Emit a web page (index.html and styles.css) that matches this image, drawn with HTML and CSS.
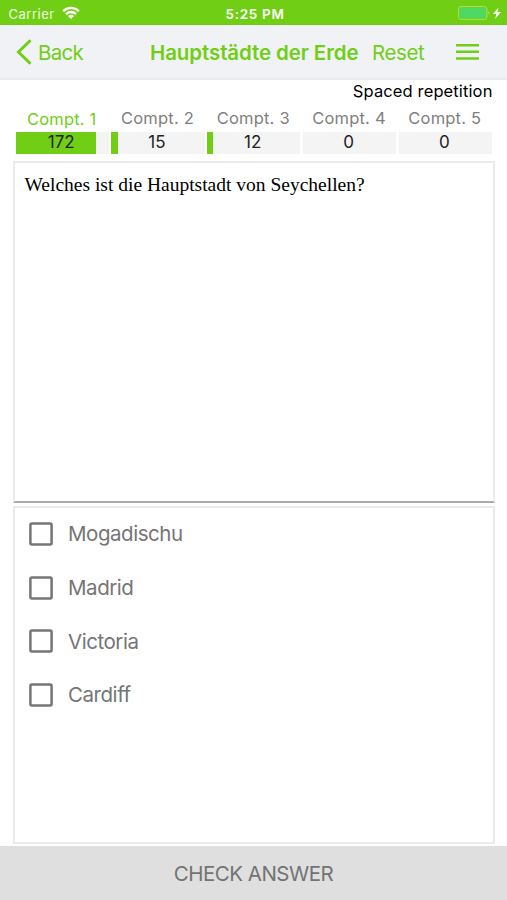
FILE: index.html
```html
<!DOCTYPE html>
<html lang="de">
<head>
<meta charset="utf-8">
<title>Hauptstädte der Erde</title>
<link rel="stylesheet" href="styles.css">
</head>
<body>
<div class="status">
  <span class="carrier">Carrier</span>
  <svg class="wifi" width="18" height="14" viewBox="0 0 18 14" fill="none" stroke="#fff" stroke-width="2.3"><path d="M1.2 5.2C5.4 .8 12.6 .8 16.8 5.2M4 8.1c2.8-2.8 7.2-2.8 10 0"/><path d="M9 13L5.9 9.9c1.8-1.6 4.4-1.6 6.2 0z" fill="#fff" stroke="none"/></svg>
  <span class="clock">5:25 PM</span>
  <svg class="battery" width="44" height="16" viewBox="0 0 44 16"><rect x=".6" y="1.6" width="28.2" height="12.8" rx="2.4" fill="none" stroke="#a4df6c"/><rect x="2" y="3" width="25.4" height="10" rx="1" fill="#4cd964"/><path d="M30.5 6c1.5.5 1.5 3.500 0 4z" fill="#a4df6c"/><path d="M40.500 2.500L35 9h3.500L37 14l6-7h-3.600z" fill="#fff"/></svg>
</div>
<header class="nav">
  <svg class="chevron" width="16" height="26" viewBox="0 0 16 26" fill="none" stroke="#70cf14" stroke-width="3"><path d="M14.500 1.300L2.500 13l12 11.700"/></svg>
  <span class="back">Back</span>
  <h1 class="title">Hauptstädte der Erde</h1>
  <span class="reset">Reset</span>
  <svg class="menu" width="23" height="16" viewBox="0 0 23 16" fill="#70cf14"><path d="M0 0h23v2.500H0zM0 6.600h23v2.500H0zM0 13.200h23v2.500H0z"/></svg>
</header>
<div class="mode"><span>Spaced repetition</span></div>
<div class="compartments">
  <div class="compartment active"><span class="label">Compt. 1</span><div class="bar"><i class="fill" style="width:86.500%"></i><b>172</b></div></div>
  <div class="compartment"><span class="label">Compt. 2</span><div class="bar"><i class="fill" style="width:7.500%"></i><b>15</b></div></div>
  <div class="compartment"><span class="label">Compt. 3</span><div class="bar"><i class="fill" style="width:6%"></i><b>12</b></div></div>
  <div class="compartment"><span class="label">Compt. 4</span><div class="bar"><b>0</b></div></div>
  <div class="compartment"><span class="label">Compt. 5</span><div class="bar"><b>0</b></div></div>
</div>
<main class="question"><span>Welches ist die Hauptstadt von Seychellen?</span></main>
<section class="answers">
  <div class="answer"><svg class="box" width="24" height="24" viewBox="0 0 24 24"><rect x="1.400" y="1.400" width="21.200" height="21.200" rx="1.500" fill="none" stroke="#757575" stroke-width="2.500"/></svg><span>Mogadischu</span></div>
  <div class="answer"><svg class="box" width="24" height="24" viewBox="0 0 24 24"><rect x="1.400" y="1.400" width="21.200" height="21.200" rx="1.500" fill="none" stroke="#757575" stroke-width="2.500"/></svg><span>Madrid</span></div>
  <div class="answer"><svg class="box" width="24" height="24" viewBox="0 0 24 24"><rect x="1.400" y="1.400" width="21.200" height="21.200" rx="1.500" fill="none" stroke="#757575" stroke-width="2.500"/></svg><span>Victoria</span></div>
  <div class="answer"><svg class="box" width="24" height="24" viewBox="0 0 24 24"><rect x="1.400" y="1.400" width="21.200" height="21.200" rx="1.500" fill="none" stroke="#757575" stroke-width="2.500"/></svg><span>Cardiff</span></div>
</section>
<footer class="check"><span>CHECK ANSWER</span></footer>
</body>
</html>
```
FILE: styles.css
```css
* { box-sizing: border-box; }
body {
  margin: 0;
  height: 900px;
  display: flex;
  flex-direction: column;
  overflow: hidden;
  background: #fff;
  font-family: Inter, "Liberation Sans", sans-serif;
  white-space: nowrap;
}
svg { display: block; flex: none; }
.status {
  height: 25px;
  flex: none;
  display: flex;
  align-items: center;
  padding: 2px 5px 0 8.5px;
  background: #70cf14;
  color: #fff;
  font-size: 13px;
}
.carrier { width: 53px; letter-spacing: 0.5px; color: #f0fbe4; }
.wifi { margin-top: -1px; }
.clock { margin-left: 146px; font-weight: 600; font-size: 13.5px; letter-spacing: 0.7px; }
.battery { margin-left: auto; margin-top: -1px; }
.nav {
  height: 55px;
  flex: none;
  display: flex;
  align-items: center;
  padding-left: 16px;
  background: #f1f2f6;
  border-bottom: 2px solid #e9eaed;
  color: #70cf14;
  font-size: 20.5px;
}
.back, .title, .reset { padding-top: 2px; }
.back { width: 112px; margin-left: 6px; letter-spacing: -0.7px; }
.title { margin: 0; width: 222px; font-size: 20.5px; font-weight: 600; letter-spacing: -0.1px; }
.reset { width: 84px; letter-spacing: -0.4px; }
.mode {
  height: 24px;
  flex: none;
  padding-right: 14.5px;
  text-align: right;
  font-size: 16.5px;
  letter-spacing: 0.12px;
  line-height: 22px;
}
.compartments {
  flex: none;
  height: 57px;
  display: grid;
  grid-template-columns: repeat(5, 1fr);
  gap: 2.3px;
  padding: 0 15px 0 15.5px;
}
.compartment { text-align: center; color: #808080; }
.label { display: block; height: 28px; padding-right: 1px; line-height: 28px; font-size: 16.5px; letter-spacing: 0.2px; }
.active .label { color: #70cf14; line-height: 30px; }
.bar { display: grid; height: 22px; background: #f4f4f4; color: #222; }
.bar > * { grid-area: 1 / 1; }
.fill { background: #70cf14; }
.bar b { padding-right: 2px; font-size: 17px; font-weight: 400; line-height: 21px; }
.question {
  height: 342px;
  flex: none;
  margin: 0 12px 0 13px;
  padding: 9px 9.5px;
  border: 2px solid #ebebeb;
  border-bottom: 2px solid #aaa;
  font-family: "Liberation Serif", serif;
  font-size: 19.5px;
  line-height: 25px;
}
.answers {
  height: 338px;
  flex: none;
  margin: 3px 12px 2px 13px;
  border: 2px solid #ebebeb;
}
.answer {
  height: 53.7px;
  display: flex;
  align-items: center;
  gap: 15px;
  padding: 0 0 2px 14px;
  color: #757575;
  font-size: 20.5px;
  letter-spacing: -0.45px;
}
.check {
  flex: 1;
  display: flex;
  align-items: center;
  justify-content: center;
  padding-top: 1px;
  background: #dfdfdf;
  color: #737373;
  font-size: 20.5px;
  letter-spacing: -0.5px;
}
```
